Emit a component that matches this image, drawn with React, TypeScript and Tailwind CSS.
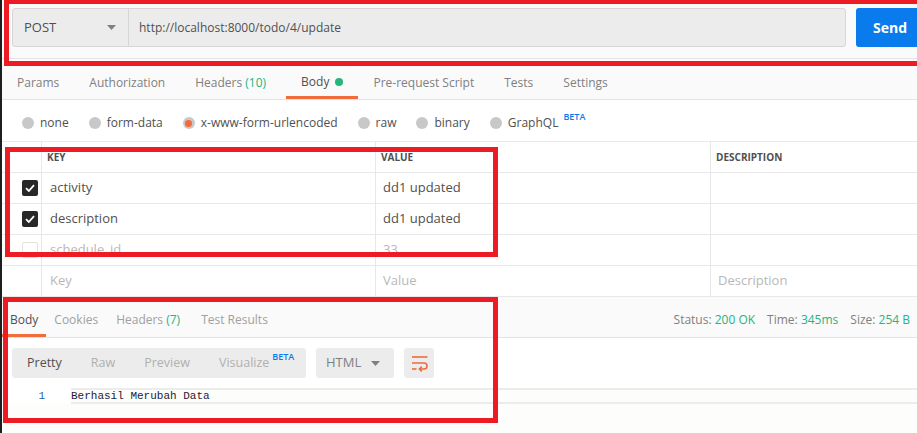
import React from 'react';

function Caret() {
  return (
    <svg width="9" height="5" viewBox="0 0 9 5" className="shrink-0">
      <polygon points="0,0 9,0 4.5,5" fill="#808080" />
    </svg>
  );
}

function Check() {
  return (
    <div className="flex h-[16px] w-[16px] items-center justify-center rounded-[2px] bg-[#282828]">
      <svg width="10" height="8" viewBox="0 0 10 8">
        <path d="M1 4.2 L3.8 7 L9 1.2" stroke="#fff" strokeWidth="1.8" fill="none" />
      </svg>
    </div>
  );
}

function WrapIcon() {
  return (
    <svg width="17" height="17" viewBox="0 0 17 17">
      <g stroke="#f26b3a" strokeWidth="1.6" fill="none">
        <path d="M1 2 H16.5" />
        <path d="M1 8 H13 a3 3 0 0 1 0 6 H8.5" />
        <path d="M10.8 11.6 L8.4 14 L10.8 16.4" />
        <path d="M1 14 H5.5" />
      </g>
    </svg>
  );
}

const bodyTypes = [
  { label: 'none' },
  { label: 'form-data' },
  { label: 'x-www-form-urlencoded', active: true },
  { label: 'raw' },
  { label: 'binary' },
  { label: 'GraphQL', beta: true },
];

const rows = [
  { key: 'activity', value: 'dd1 updated', on: true },
  { key: 'description', value: 'dd1 updated', on: true },
  { key: 'schedule_id', value: '33', on: false },
];

export default function App() {
  return (
    <div className="relative flex h-[433px] w-[917px] overflow-hidden bg-white font-['Open_Sans',sans-serif] text-[12px] text-[#505050]">
      <div className="w-[2px] shrink-0 bg-[#1e1e1e]" />
      <div className="flex min-w-0 flex-1 flex-col">
        {/* request bar */}
        <div className="flex h-[59px] shrink-0 items-start gap-[10px] border-b border-[#e4e4e4] bg-[#fafafa] pl-[10px] pt-[8px]">
          <div className="flex h-[39px] w-[834px] shrink-0 rounded-[3px] border border-[#d6d6d6] bg-[#ececec]">
            <div className="flex w-[116px] items-center justify-between border-r border-[#d6d6d6] pl-[11px] pr-[12px] text-[13px]">
              POST
              <Caret />
            </div>
            <div className="flex items-center pl-[10px]">http://localhost:8000/todo/4/update</div>
          </div>
          <button className="h-[39px] w-[80px] shrink-0 rounded-[3px] bg-[#097bed] pl-[17px] text-left text-[14px] font-bold text-white">
            Send
          </button>
        </div>

        {/* request tabs */}
        <div className="flex h-[41px] shrink-0 items-end border-b border-[#e4e4e4] bg-[#fafafa] text-[#808080]">
          <div className="flex h-[33px] items-center px-[15px] pt-[1px]">Params</div>
          <div className="flex h-[33px] items-center px-[15px] pt-[1px]">Authorization</div>
          <div className="flex h-[33px] items-center pl-[15px] pr-[20px] pt-[1px]">
            Headers&nbsp;<span className="text-[#26b47f]">(10)</span>
          </div>
          <div className="flex h-[33px] items-center gap-[6px] border-b-[3px] border-[#f26b3a] px-[15px] pt-[2px] text-[#505050]">
            Body
            <span className="h-[8px] w-[8px] rounded-full bg-[#26b47f]" />
          </div>
          <div className="flex h-[33px] items-center px-[15px] pt-[1px]">Pre-request Script</div>
          <div className="flex h-[33px] items-center px-[15px] pt-[1px]">Tests</div>
          <div className="flex h-[33px] items-center px-[15px] pt-[1px]">Settings</div>
        </div>

        {/* body types */}
        <div className="flex h-[41px] shrink-0 items-center gap-[20px] pl-[20px] pt-[5px]">
          {bodyTypes.map((t) => (
            <div key={t.label} className="flex items-center gap-[6px]">
              <span className="flex h-[12px] w-[12px] items-center justify-center rounded-full bg-[#c8c8c8]">
                {t.active && <span className="h-[7px] w-[7px] rounded-full bg-[#f26b3a]" />}
              </span>
              <span>{t.label}</span>
              {t.beta && (
                <span className="relative -top-[6px] -ml-[1px] text-[9px] font-semibold text-[#097bed]">BETA</span>
              )}
            </div>
          ))}
        </div>

        {/* params table */}
        <div className="grid shrink-0 grid-cols-[40px_334px_335px_1fr] border-t border-[#e8e8e8]">
          <div className="h-[31px] border-b border-r border-[#e8e8e8]" />
          <div className="flex h-[31px] items-center border-b border-r border-[#e8e8e8] pl-[5px] text-[10px] font-bold">KEY</div>
          <div className="flex h-[31px] items-center border-b border-r border-[#e8e8e8] pl-[5px] text-[10px] font-bold">VALUE</div>
          <div className="flex h-[31px] items-center border-b border-[#e8e8e8] pl-[5px] text-[10px] font-bold">DESCRIPTION</div>
          {rows.map((r) => (
            <React.Fragment key={r.key}>
              <div className="flex h-[31px] items-center border-b border-r border-[#e8e8e8] pl-[20px]">
                {r.on ? <Check /> : <div className="h-[16px] w-[16px] rounded-[2px] border border-[#e2e2e2]" />}
              </div>
              <div className={`flex h-[31px] items-center border-b border-r border-[#e8e8e8] pl-[8px] text-[13px] ${r.on ? '' : 'text-[#b8b8b8]'}`}>
                {r.key}
              </div>
              <div className={`flex h-[31px] items-center border-b border-r border-[#e8e8e8] pl-[7px] text-[13px] ${r.on ? '' : 'text-[#b8b8b8]'}`}>
                {r.value}
              </div>
              <div className="h-[31px] border-b border-[#e8e8e8]" />
            </React.Fragment>
          ))}
          <div className="h-[31px] border-b border-r border-[#e8e8e8]" />
          <div className="flex h-[31px] items-center border-b border-r border-[#e8e8e8] pl-[8px] text-[13px] text-[#b8b8b8]">Key</div>
          <div className="flex h-[31px] items-center border-b border-r border-[#e8e8e8] pl-[7px] text-[13px] text-[#b8b8b8]">Value</div>
          <div className="flex h-[31px] items-center border-b border-[#e8e8e8] pl-[7px] text-[13px] text-[#b8b8b8]">Description</div>
        </div>

        {/* response tabs */}
        <div className="flex h-[41px] shrink-0 items-end justify-between border-b border-[#e4e4e4] bg-[#fafafa]">
          <div className="flex text-[12px] text-[#a0a0a0]">
            <div className="flex h-[40px] items-center border-b-[3px] border-[#f26b3a] px-[8px] pt-[9px] text-[#505050]">Body</div>
            <div className="flex h-[40px] items-center px-[8px] pt-[6px]">Cookies</div>
            <div className="flex h-[40px] items-center px-[10px] pt-[6px]">
              Headers&nbsp;<span className="text-[#26b47f]">(7)</span>
            </div>
            <div className="flex h-[40px] items-center px-[11px] pt-[6px]">Test Results</div>
          </div>
          <div className="flex h-[40px] items-center gap-[12px] pr-[7px] pt-[6px] text-[#808080]">
            <span>
              Status: <span className="text-[#26b47f]">200 OK</span>
            </span>
            <span>
              Time: <span className="text-[#26b47f]">345ms</span>
            </span>
            <span>
              Size: <span className="text-[#26b47f]">254 B</span>
            </span>
          </div>
        </div>

        {/* response toolbar */}
        <div className="mt-[10px] flex h-[30px] shrink-0 items-stretch gap-[10px] pl-[10px]">
          <div className="flex w-[294px] items-center gap-[29px] rounded-[3px] bg-[#ececec] pl-[15px] text-[12.5px] text-[#b0b0b0]">
            <span className="text-[#505050]">Pretty</span>
            <span>Raw</span>
            <span>Preview</span>
            <span className="flex items-center">
              Visualize
              <span className="relative -top-[6px] ml-[3px] text-[9px] font-semibold text-[#097bed]">BETA</span>
            </span>
          </div>
          <div className="flex w-[78px] items-center justify-between rounded-[3px] bg-[#ececec] pl-[10px] pr-[14px] text-[13px] text-[#808080]">
            HTML
            <Caret />
          </div>
          <div className="flex w-[30px] items-center justify-center rounded-[3px] bg-[#ececec]">
            <WrapIcon />
          </div>
        </div>

        {/* response code */}
        <div className="mt-[10px] flex h-[16px] shrink-0 font-['Liberation_Mono',monospace] text-[11px]">
          <div className="w-[69px] pr-[26px] text-right leading-[16px] text-[#2a5ea8]">1</div>
          <div className="flex-1 border-y-2 border-[#ececec] bg-[#fdfdfb] leading-[12px] text-[#1b1b3a]">Berhasil Merubah Data</div>
        </div>
        <div className="flex-1 bg-[#fdfdfb]" />
      </div>

      {/* red annotation boxes */}
      <div className="pointer-events-none absolute left-[4px] top-[-1px] h-[67px] w-[930px] border-[5px] border-[#ed1c24]" />
      <div className="pointer-events-none absolute left-[5px] top-[147px] h-[110px] w-[493px] border-[5px] border-[#ed1c24]" />
      <div className="pointer-events-none absolute left-[3px] top-[297px] h-[126px] w-[495px] border-[5px] border-[#ed1c24]" />
    </div>
  );
}
